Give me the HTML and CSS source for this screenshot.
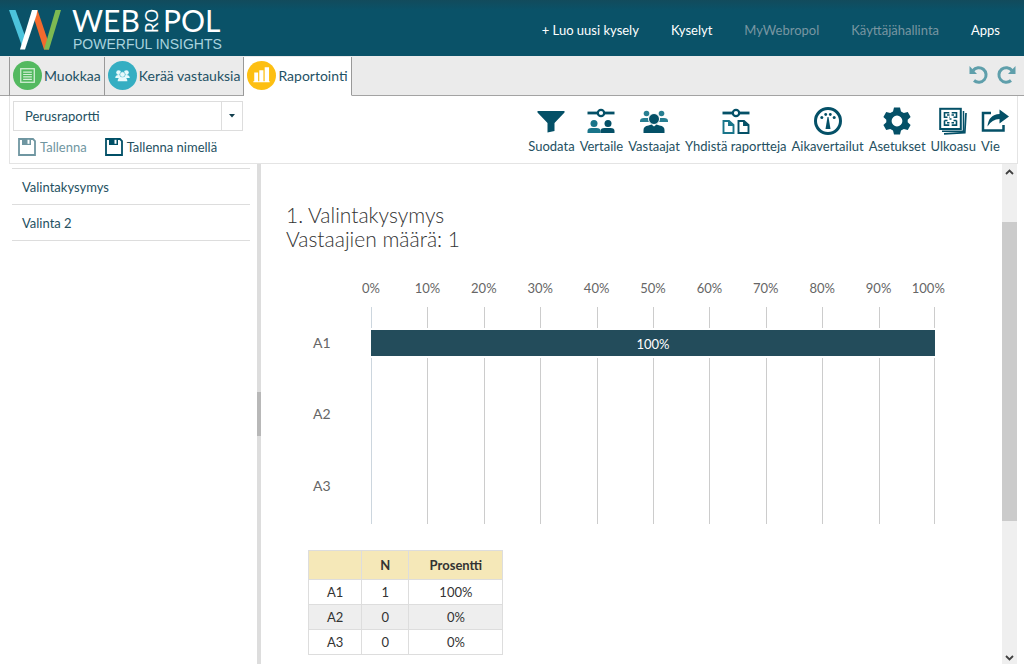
FILE: index.html
```html
<!DOCTYPE html>
<html lang="fi">
<head>
<meta charset="utf-8">
<title>Webropol – Raportointi</title>
<link rel="stylesheet" href="styles.css">
</head>
<body>
<header class="header">
  <a class="brand" href="#" aria-label="Webropol">
    <svg width="220" height="56" viewBox="0 -8 220 56">
      <path d="M0 2h6.500l11 30-3.500 9z" fill="#4cc3dc"/>
      <path d="M24 2h4.500l11.500 34v5.500h-5L25.500 12z" fill="#f26a2e"/>
      <path d="M28.500 2H23L11 41.500h5L27.500 7z" fill="#fff"/>
      <path d="M46.500 2H52L40 41.500h-5z" fill="#7dba52"/>
      <g class="logo-name"><text x="63" y="24">WEB</text><text x="154" y="24">POL</text></g>
      <text class="logo-turn" transform="translate(149 25) rotate(-90)">RO</text>
      <text class="logo-sub" x="64" y="41">POWERFUL INSIGHTS</text>
    </svg>
  </a>
  <nav class="nav">
    <a href="#">+ Luo uusi kysely</a>
    <a href="#">Kyselyt</a>
    <a href="#" class="muted">MyWebropol</a>
    <a href="#" class="muted">Käyttäjähallinta</a>
    <a href="#">Apps</a>
  </nav>
</header>

<div class="tabbar">
  <nav class="tabs">
    <a class="tab" href="#">
      <svg width="29" height="29" viewBox="0 0 30 30"><circle cx="15" cy="15" r="15" fill="#53b960"/><rect x="8" y="8" width="14" height="14" fill="none" stroke="#d5f0d8" stroke-width="1.300"/><path d="M10.500 11.500h9M10.500 14h9M10.500 16.500h9M10.500 19h9" stroke="#d5f0d8" stroke-width="1.200"/></svg>
      Muokkaa
    </a>
    <a class="tab" href="#">
      <svg width="29" height="29" viewBox="0 0 30 30"><circle cx="15" cy="15" r="15" fill="#35aec2"/><g fill="#e8fafc"><circle cx="11" cy="12" r="2.500"/><circle cx="19" cy="12" r="2.500"/><path d="M7.500 17.500q0-3 3.500-3h8q3.500 0 3.500 3z"/><circle cx="15" cy="14" r="2.800" stroke="#35aec2" stroke-width=".6"/><path d="M10 21q0-4 3-4h4q3 0 3 4z"/></g></svg>
      Kerää vastauksia
    </a>
    <a class="tab active" href="#" aria-current="page">
      <svg width="29" height="29" viewBox="0 0 30 30"><circle cx="15" cy="15" r="15" fill="#fdbf12"/><path d="M7.500 12h4v9.500h-4zM12.700 9.500h4.300v12h-4.300zM18.300 6.500h4.500v15h-4.500zM6.500 21h17v1h-17z" fill="#fff"/></svg>
      Raportointi
    </a>
  </nav>
  <div class="history">
    <button type="button" aria-label="Kumoa"><svg width="20" height="20" viewBox="0 0 20 20"><path d="M4 5.500A7.300 7.300 0 1 1 5 15.500" fill="none" stroke="#5f9fab" stroke-width="3"/><path d="M.5 1v8h7.500z" fill="#5f9fab"/></svg></button>
    <button type="button" aria-label="Tee uudelleen"><svg width="20" height="20" viewBox="0 0 20 20"><path d="M16 5.500A7.300 7.300 0 1 0 15 15.500" fill="none" stroke="#5f9fab" stroke-width="3"/><path d="M19.500 1v8H12z" fill="#5f9fab"/></svg></button>
  </div>
</div>

<section class="toolbar">
  <div class="report-box">
    <div class="combo">
      <input type="text" value="Perusraportti" aria-label="Raportti">
      <button type="button" aria-label="Avaa raporttilista"><svg width="6" height="4" viewBox="0 0 6 4"><path d="M0 0h6L3 3.500z" fill="#123f4e"/></svg></button>
    </div>
    <div class="saves">
      <button type="button" class="save dim"><svg width="18" height="18" viewBox="0 0 18 18"><path d="M1 1h14l2 2v14H1z" fill="none" stroke="currentColor" stroke-width="1.800"/><path d="M4 1h9v6H4z" fill="currentColor"/><path d="M9.500 1.800h2v4h-2z" fill="#fff"/></svg>Tallenna</button>
      <button type="button" class="save"><svg width="18" height="18" viewBox="0 0 18 18"><path d="M1 1h14l2 2v14H1z" fill="none" stroke="#004f66" stroke-width="1.800"/><path d="M4 1h9v6H4z" fill="#004f66"/><path d="M9.500 1.800h2v4h-2z" fill="#fff"/></svg>Tallenna nimellä</button>
    </div>
  </div>
  <div class="tools">
    <button type="button" class="tool"><svg width="28" height="28" viewBox="0 0 28 28"><path d="M.5 4h27v1.500L17.500 16v8l-7 1.500V16L.5 5.500z" fill="#045067"/></svg>Suodata</button>
    <button type="button" class="tool"><svg width="28" height="28" viewBox="0 0 28 28"><path d="M.5 6h27" stroke="#045067" stroke-width="2.800"/><circle cx="14" cy="6" r="3.200" fill="#fff" stroke="#045067" stroke-width="2.200"/><g fill="#19758a"><circle cx="7" cy="16.500" r="3.500"/><path d="M.5 26v-2q0-3 4-3h5q4 0 4 3v2z"/></g><g fill="#045067"><circle cx="21" cy="16.500" r="3.500"/><path d="M13.500 26v-2q0-3 4-3h6q4 0 4 3v2z"/></g></svg>Vertaile</button>
    <button type="button" class="tool"><svg width="28" height="28" viewBox="0 0 28 28"><g fill="#287f92"><circle cx="6.500" cy="6.500" r="2.800"/><circle cx="21.500" cy="6.500" r="2.800"/><path d="M0 15v-1q0-3 4-3h4l2 4zM28 15v-1q0-3-4-3h-4l-2 4z"/></g><g fill="#045067"><circle cx="14" cy="12" r="5.500" stroke="#fff"/><path d="M3.500 26v-3q0-4 5-4.500l3-1 2.500 2 2.500-2 3 1q5 .5 5 4.500v3z"/></g></svg>Vastaajat</button>
    <button type="button" class="tool"><svg width="28" height="28" viewBox="0 0 28 28"><path d="M.5 6h27" stroke="#045067" stroke-width="2.800"/><circle cx="14" cy="6" r="3.200" fill="#fff" stroke="#045067" stroke-width="2.200"/><path d="M1.500 14H7l4.500 4v8h-10zM7 14v4h4.500" fill="none" stroke="#19758a" stroke-width="1.900"/><path d="M16.500 14H22l4.500 4v8h-10zM22 14v4h4.500" fill="none" stroke="#045067" stroke-width="1.900"/></svg>Yhdistä raportteja</button>
    <button type="button" class="tool"><svg width="28" height="28" viewBox="0 0 28 28"><circle cx="14" cy="14" r="12.500" fill="none" stroke="#045067" stroke-width="3"/><g fill="#045067"><circle cx="7.800" cy="10.500" r="1.500"/><circle cx="11.700" cy="7.500" r="1.400"/><circle cx="16.300" cy="7.500" r="1.400"/><circle cx="20.200" cy="10.500" r="1.500"/><path d="M13.500 10h1l2 12h-5z"/></g></svg>Aikavertailut</button>
    <button type="button" class="tool"><svg width="28" height="28" viewBox="0 0 28 28"><path fill="#045067" fill-rule="evenodd" d="M11 .5h6l1 4 2.800 1.600 4-1.200 2.800 5L24.700 12.700v2.600l2.900 2.800-2.800 5-4-1.200L18 23.500l-1 4h-6l-1-4-2.800-1.600-4 1.200-2.800-5 2.900-2.800v-2.600L.4 9.900l2.800-5 4 1.200L10 4.500zM14 8.600a5.400 5.400 0 1 0 0 10.800 5.400 5.400 0 0 0 0-10.800z"/></svg>Asetukset</button>
    <button type="button" class="tool"><svg width="28" height="28" viewBox="0 0 28 28"><path d="M5 26.800 25.800 25.700 27 6" fill="none" stroke="#045067" stroke-width="1.700"/><path d="M3 24.200h21.500V4" fill="none" stroke="#045067" stroke-width="1.500"/><rect x="1.200" y="1.800" width="20.600" height="20.200" fill="#fff" stroke="#045067" stroke-width="2"/><path d="M10.300 5.700H5.500v4.600h3m1.800 0h.5M12.700 5.700h4.800v4.600h-3M5.500 13.500v4.600h4.800M17.500 13.500v4.600h-4.800M5.500 13.500h3m6 0h3M8 8h2.500m2 0H15M8 15.800h2.500m2 0H15M10.500 12h2" fill="none" stroke="#045067" stroke-width="1.600"/></svg>Ulkoasu</button>
    <button type="button" class="tool tool-last"><svg width="28" height="28" viewBox="0 0 28 28"><path d="M10 6H2v17.500h20.500V18" fill="none" stroke="#045067" stroke-width="2.500"/><path d="M18.500 2.500 28 9.500l-9.500 7V12Q11 12 6.500 19.500 7.500 7.500 18.500 7z" fill="#045067"/></svg>Vie</button>
  </div>
</section>

<div class="workspace">
  <aside class="sidebar">
    <a href="#">Valintakysymys</a>
    <a href="#">Valinta 2</a>
  </aside>
  <div class="splitter"><div class="grip"></div></div>
  <main class="report">
    <h1 class="title">1. Valintakysymys<br>Vastaajien määrä: 1</h1>
    <div class="chart">
      <div class="names"><span>A1</span><span>A2</span><span>A3</span></div>
      <div class="plot">
        <div class="axis"><span>0%</span><span>10%</span><span>20%</span><span>30%</span><span>40%</span><span>50%</span><span>60%</span><span>70%</span><span>80%</span><span>90%</span><span>100%</span></div>
        <div class="area">
          <div class="grid"><i></i><i></i><i></i><i></i><i></i><i></i><i></i><i></i><i></i><i></i></div>
          <div class="rows">
            <div class="row"><div class="bar" style="width:100%">100%</div></div>
            <div class="row"></div>
            <div class="row"></div>
          </div>
        </div>
      </div>
    </div>
    <table class="results">
      <thead><tr><th></th><th>N</th><th>Prosentti</th></tr></thead>
      <tbody>
        <tr><td>A1</td><td>1</td><td>100%</td></tr>
        <tr><td>A2</td><td>0</td><td>0%</td></tr>
        <tr><td>A3</td><td>0</td><td>0%</td></tr>
      </tbody>
    </table>
  </main>
  <div class="scroll">
    <svg class="arrow" width="9" height="6" viewBox="0 0 9 6"><path d="M1 5l3.500-3.500L8 5" fill="none" stroke="#404040" stroke-width="1.800"/></svg>
    <div class="track"><div class="thumb"></div></div>
    <svg class="arrow" width="9" height="6" viewBox="0 0 9 6"><path d="M1 1l3.500 3.500L8 1" fill="none" stroke="#404040" stroke-width="1.800"/></svg>
  </div>
</div>
</body>
</html>
```
FILE: styles.css
```css
* { box-sizing: border-box; }
body {
  margin: 0;
  height: 100vh;
  display: flex;
  flex-direction: column;
  overflow: hidden;
  background: #fff;
  color: #24505f;
  font: 13px/16px Lato, sans-serif;
}
a { color: inherit; text-decoration: none; }
button { font: inherit; color: inherit; background: none; border: 0; padding: 0; }
svg { display: block; flex: none; }

.header {
  flex: none;
  height: 56px;
  display: flex;
  align-items: center;
  justify-content: space-between;
  padding: 0 24px 0 9px;
  background: linear-gradient(#124b5c, #0a5268 10px);
}
.logo-name { font: 400 30px Lato, sans-serif; fill: #fff; }
.logo-turn { font: 400 17px Lato, sans-serif; fill: #fff; }
.logo-sub { font: 14px "Liberation Sans", sans-serif; fill: #a9d3de; }
.nav { display: flex; gap: 32px; padding-top: 4px; color: #fff; }
.nav .muted { color: #7896a2; }

.tabbar {
  flex: none;
  height: 40px;
  display: flex;
  justify-content: space-between;
  padding: 1px 8px 0 9px;
  background: #ebebeb;
  border-bottom: 1px solid #a3a3a3;
}
.tabs { display: flex; height: 39px; border-left: 1px solid #999; }
.tab {
  display: flex;
  align-items: center;
  gap: 2px;
  padding: 0 3px 1px;
  border-right: 1px solid #999;
  border-bottom: 1px solid #a3a3a3;
  font-size: 14px;
  color: #1f5265;
}
.tab.active { background: #fff; border-bottom-color: #fff; }
.history { display: flex; align-items: center; gap: 7px; padding-bottom: 2px; }

.toolbar {
  flex: none;
  display: flex;
  justify-content: space-between;
  margin: 0 6px 0 9px;
  padding: 5px 8px 7px 3px;
  border: 1px solid #e4e4e4;
  border-top: 0;
}
.report-box { width: 230px; }
.combo { display: flex; height: 30px; border: 1px solid #ddd; }
.combo input {
  flex: 1;
  min-width: 0;
  border: 0;
  padding: 0 11px;
  font: inherit;
  color: inherit;
  background: #fff;
}
.combo button { width: 21px; display: grid; place-items: center; border-left: 1px solid #ddd; }
.saves { display: flex; gap: 18px; padding: 7px 5px 0; }
.save { display: flex; align-items: center; gap: 4px; }
.save.dim { color: #6f96a1; }
.tools { display: flex; gap: 5px; padding-top: 6px; }
.tool { display: flex; flex-direction: column; align-items: center; gap: 3px; }
.tool-last { align-items: flex-start; }

.workspace { flex: 1; min-height: 0; display: flex; padding-right: 7px; }
.sidebar { width: 257px; padding: 4px 7px 0 12px; }
.sidebar a {
  display: block;
  padding: 10px 10px 9px;
  border-bottom: 1px solid #ddd;
}
.sidebar a:first-child { border-top: 1px solid #ddd; }
.splitter { width: 4px; display: flex; align-items: center; background: #ddd; }
.grip { width: 4px; height: 44px; background: #b8b8b8; }
.report { flex: 1; min-width: 0; padding: 39px 67px 0 25px; }
.title { margin: 0; font: 300 21px/24px Lato, sans-serif; color: #333; }

.chart { display: flex; align-items: flex-end; margin: 29px 0 0 27px; font-size: 13px; color: #666; }
.names { width: 58px; height: 217px; display: grid; grid-template-rows: repeat(3, 1fr); align-items: center; padding-bottom: 2px; font-size: 14px; }
.plot { flex: 1; }
.axis { display: grid; grid-template-columns: repeat(11, 1fr); margin: 0 -5% 11px; text-align: center; }
.axis span:last-child { text-align: left; padding-left: 5px; }
.area { display: grid; height: 217px; }
.grid, .rows { grid-area: 1 / 1; display: grid; }
.grid { grid-template-columns: repeat(10, 1fr); }
.grid i { border-left: 1px solid #ccc; }
.grid i:first-child { border-color: #ccd6de; }
.grid i:last-child { border-right: 1px solid #ccc; }
.rows { grid-template-rows: repeat(3, 1fr); }
.row { display: flex; align-items: center; }
.bar {
  height: 30px;
  border: solid #fff;
  border-width: 2px 0;
  background: #234c5b;
  color: #fff;
  line-height: 28px;
  text-align: center;
}

.results { margin: 26px 0 0 22px; border-collapse: collapse; color: #333; text-align: center; }
.results th, .results td { border: 1px solid #ddd; padding: 4px 18px; }
.results th { background: #f5e8b8; padding: 6px 18px; }
.results th:first-child { width: 53px; }
.results th:last-child { width: 94px; }
.results tbody tr:nth-child(2) { background: #eee; }

.scroll { width: 15px; display: flex; flex-direction: column; align-items: center; padding: 5px 0 3px; background: #efefef; }
.track { flex: 1; width: 100%; padding: 47px 0 0; }
.thumb { height: 69%; background: #cbcbcb; }
```
